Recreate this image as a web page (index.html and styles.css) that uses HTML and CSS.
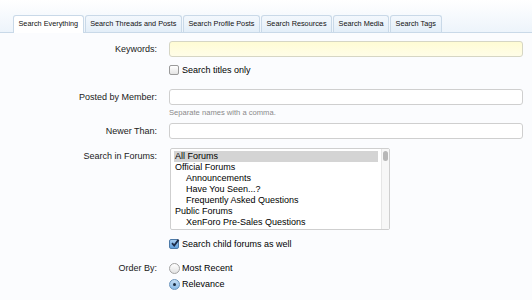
FILE: index.html
```html
<!DOCTYPE html>
<html lang="en">
<head>
  <meta charset="UTF-8" />
  <title>Search</title>
  <link rel="stylesheet" href="styles.css">
</head>
<body>
  <div class="tab-strip">
    <ul class="tabs">
      <li class="tab active">Search Everything</li>
      <li class="tab">Search Threads and Posts</li>
      <li class="tab">Search Profile Posts</li>
      <li class="tab">Search Resources</li>
      <li class="tab">Search Media</li>
      <li class="tab">Search Tags</li>
    </ul>
  </div>

  <form class="search-form">
    <div class="row row-keywords">
      <label class="label">Keywords:</label>
      <div class="control">
        <div class="text-input keywords"></div>
        <div class="check-line"><span class="box"></span>Search titles only</div>
      </div>
    </div>

    <div class="row row-member">
      <label class="label">Posted by Member:</label>
      <div class="control">
        <div class="text-input"></div>
        <div class="hint">Separate names with a comma.</div>
      </div>
    </div>

    <div class="row row-newer">
      <label class="label">Newer Than:</label>
      <div class="control">
        <div class="text-input"></div>
      </div>
    </div>

    <div class="row row-forums">
      <label class="label">Search in Forums:</label>
      <div class="control">
        <div class="listbox">
          <ul class="options">
            <li class="selected">All Forums</li>
            <li>Official Forums</li>
            <li class="child">Announcements</li>
            <li class="child">Have You Seen...?</li>
            <li class="child">Frequently Asked Questions</li>
            <li>Public Forums</li>
            <li class="child">XenForo Pre-Sales Questions</li>
          </ul>
          <div class="scrollbar"><div class="thumb"></div></div>
        </div>
        <div class="check-line child-forums">
          <span class="box checked">
            <svg viewBox="0 0 10 10" width="10" height="10"><path d="M2 5.2 L4.2 7.6 L8.6 1.6" fill="none" stroke="#1d2d4a" stroke-width="1.8"/></svg>
          </span>Search child forums as well
        </div>
      </div>
    </div>

    <div class="row row-order">
      <label class="label">Order By:</label>
      <div class="control">
        <div class="radio-line"><span class="radio"></span>Most Recent</div>
        <div class="radio-line"><span class="radio on"></span>Relevance</div>
      </div>
    </div>
  </form>
</body>
</html>
```

FILE: styles.css
```css
body {
  margin: 0;
  font-family: "Liberation Sans", Arial, sans-serif;
  font-size: 9px;
  color: #000;
  background-color: #fbfcfe;
}

.tab-strip {
  background: linear-gradient(to bottom, #ffffff 0%, #edf4fb 100%);
  border-bottom: 1px solid #c9d9e8;
  height: 32px;
  display: flex;
  align-items: flex-end;
}

.tabs {
  list-style: none;
  margin: 0 0 -1px 13px;
  padding: 0;
  display: flex;
  gap: 1px;
}

.tab {
  font-size: 7.3px;
  height: 16px;
  line-height: 16px;
  padding: 0 4.5px;
  border: 1px solid #c9d9e8;
  border-bottom: none;
  border-radius: 3px 3px 0 0;
  background: linear-gradient(to bottom, #f3f8fd, #e3eef8);
  color: #111;
}

.tab.active {
  background: #fff;
  height: 17px;
}

.search-form {
  padding-top: 8px;
}

.row {
  display: grid;
  grid-template-columns: 157px 1fr;
  column-gap: 12px;
}

.label {
  text-align: right;
  color: #1a1a1a;
  line-height: 16px;
}

.control {
  padding-right: 9px;
}

.text-input {
  height: 14px;
  border: 1px solid #cfcfcf;
  border-radius: 3px;
  background: #fff;
}

.text-input.keywords {
  background: linear-gradient(to bottom, #fffcd4, #fffde8);
  border-color: #d6d6c4;
}

.check-line {
  display: flex;
  align-items: center;
  gap: 3px;
  margin-top: 7px;
  line-height: 12px;
}

.box {
  width: 8px;
  height: 8px;
  border: 1px solid #9a9a9a;
  border-radius: 2px;
  background: linear-gradient(to bottom, #ffffff, #e4e4e4);
  position: relative;
}

.box.checked {
  background: linear-gradient(to bottom, #a9cdf0, #5f9edb);
  border-color: #4d7aa8;
}

.box svg {
  position: absolute;
  left: 0;
  top: -2px;
}

.row-member {
  margin-top: 13px;
}

.hint {
  color: #8a8a8a;
  font-size: 7.6px;
  margin-top: 3px;
}

.row-newer {
  margin-top: 6px;
}

.row-forums {
  margin-top: 9px;
}

.listbox {
  width: 218px;
  height: 80px;
  border: 1px solid #cfcfcf;
  border-radius: 2px;
  background: #fff;
  display: flex;
  margin-left: 1px;
}

.options {
  list-style: none;
  margin: 0;
  padding: 2px 3px;
  flex: 1;
}

.options li {
  height: 11px;
  line-height: 11px;
  padding-left: 1px;
}

.options li.child {
  padding-left: 12px;
}

.options li.selected {
  background: #d4d4d4;
}

.scrollbar {
  width: 7px;
  border-left: 1px solid #e6e6e6;
  background: #f7f7f7;
  padding: 2px 0;
}

.thumb {
  width: 5px;
  height: 10px;
  margin: 0 auto;
  border-radius: 3px;
  background: #b7b7b7;
}

.check-line.child-forums {
  margin-top: 8px;
}

.row-order {
  margin-top: 12px;
}

.row-order .label {
  line-height: 12px;
}

.radio-line {
  display: flex;
  align-items: center;
  gap: 2px;
  line-height: 12px;
  margin-bottom: 4px;
}

.radio {
  width: 9px;
  height: 9px;
  border: 1px solid #a3a3a3;
  border-radius: 50%;
  background: linear-gradient(to bottom, #ffffff, #e2e2e2);
  position: relative;
}

.radio.on {
  background: linear-gradient(to bottom, #c3dcf3, #8bbbe7);
  border-color: #6a94bd;
}

.radio.on::after {
  content: "";
  position: absolute;
  left: 3px;
  top: 3px;
  width: 3px;
  height: 3px;
  border-radius: 50%;
  background: #1b2b40;
}
```
